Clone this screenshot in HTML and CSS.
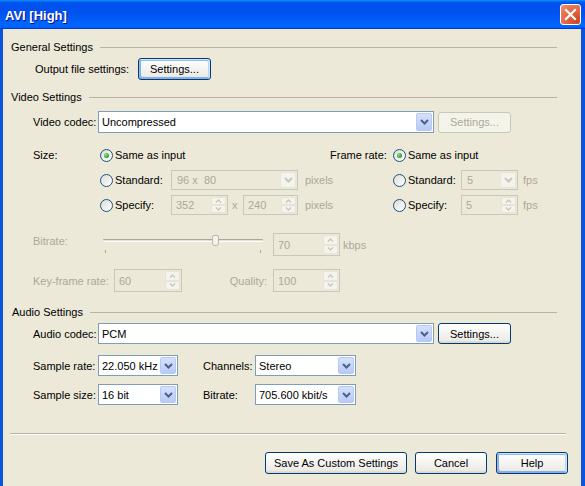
FILE: index.html
```html
<!DOCTYPE html>
<html>
<head>
<meta charset="utf-8">
<title>AVI [High]</title>
<link rel="stylesheet" href="styles.css">
</head>
<body>
<div class="window">
  <div class="titlebar">
    <span class="title">AVI [High]</span>
    <span class="close"><svg width="13" height="13" viewBox="0 0 13 13"><path d="M2 2L11 11M11 2L2 11" stroke="#fff" stroke-width="2.2" stroke-linecap="square"/></svg></span>
  </div>
  <div class="client">
    <div class="ghead ghead-general"><span>General Settings</span><i class="rule"></i></div>
    <div class="row row-output">
      <span class="lbl lbl-output">Output file settings:</span>
      <button class="btn btn-focus w73">Settings...</button>
    </div>

    <div class="ghead ghead-video"><span>Video Settings</span><i class="rule"></i></div>
    <div class="row row-codec">
      <span class="lbl w65">Video codec:</span>
      <div class="combo w336"><span class="val">Uncompressed</span><span class="arrow"><svg width="9" height="6" viewBox="0 0 9 6"><path d="M1 1L4.5 4.5L8 1" fill="none" stroke="#4D6185" stroke-width="2"/></svg></span></div>
      <button class="btn btn-disabled w73 ml4" disabled>Settings...</button>
    </div>

    <div class="size-grid">
      <span class="lbl">Size:</span>
      <label class="radio span2"><i class="rb checked"></i>Same as input</label>
      <span class="lbl fr-lbl">Frame rate:</span>
      <label class="radio span2"><i class="rb checked"></i>Same as input</label>

      <label class="radio c2"><i class="rb"></i>Standard:</label>
      <div class="combo dis"><span class="val">96 x &nbsp;80</span><span class="arrow"><svg width="9" height="6" viewBox="0 0 9 6"><path d="M1 1L4.5 4.5L8 1" fill="none" stroke="#C9C7BA" stroke-width="2"/></svg></span></div>
      <span class="unit">pixels</span>
      <label class="radio"><i class="rb"></i>Standard:</label>
      <div class="combo dis"><span class="val">5</span><span class="arrow"><svg width="9" height="6" viewBox="0 0 9 6"><path d="M1 1L4.5 4.5L8 1" fill="none" stroke="#C9C7BA" stroke-width="2"/></svg></span></div>
      <span class="unit fps">fps</span>

      <label class="radio c2"><i class="rb"></i>Specify:</label>
      <div class="pair">
        <div class="spin w57"><span class="val">352</span><span class="sbtns"><span class="sb"><svg width="7" height="4" viewBox="0 0 7 4"><path d="M1 3.5L3.5 1L6 3.5" fill="none" stroke="#C9C7BA" stroke-width="1.3"/></svg></span><span class="sb"><svg width="7" height="4" viewBox="0 0 7 4"><path d="M1 .5L3.5 3L6 .5" fill="none" stroke="#C9C7BA" stroke-width="1.3"/></svg></span></span></div>
        <span class="times">x</span>
        <div class="spin w55"><span class="val">240</span><span class="sbtns"><span class="sb"><svg width="7" height="4" viewBox="0 0 7 4"><path d="M1 3.5L3.5 1L6 3.5" fill="none" stroke="#C9C7BA" stroke-width="1.3"/></svg></span><span class="sb"><svg width="7" height="4" viewBox="0 0 7 4"><path d="M1 .5L3.5 3L6 .5" fill="none" stroke="#C9C7BA" stroke-width="1.3"/></svg></span></span></div>
      </div>
      <span class="unit">pixels</span>
      <label class="radio"><i class="rb"></i>Specify:</label>
      <div class="spin"><span class="val">5</span><span class="sbtns"><span class="sb"><svg width="7" height="4" viewBox="0 0 7 4"><path d="M1 3.5L3.5 1L6 3.5" fill="none" stroke="#C9C7BA" stroke-width="1.3"/></svg></span><span class="sb"><svg width="7" height="4" viewBox="0 0 7 4"><path d="M1 .5L3.5 3L6 .5" fill="none" stroke="#C9C7BA" stroke-width="1.3"/></svg></span></span></div>
      <span class="unit fps">fps</span>
    </div>

    <div class="row row-bitrate">
      <span class="lbl dlbl w70 top">Bitrate:</span>
      <div class="slider">
        <i class="track"></i>
        <i class="thumb"></i>
        <i class="tick t1"></i>
        <i class="tick t2"></i>
      </div>
      <div class="spin w67 ml10"><span class="val">70</span><span class="sbtns"><span class="sb"><svg width="7" height="4" viewBox="0 0 7 4"><path d="M1 3.5L3.5 1L6 3.5" fill="none" stroke="#C9C7BA" stroke-width="1.3"/></svg></span><span class="sb"><svg width="7" height="4" viewBox="0 0 7 4"><path d="M1 .5L3.5 3L6 .5" fill="none" stroke="#C9C7BA" stroke-width="1.3"/></svg></span></span></div>
      <span class="dlbl kbps">kbps</span>
    </div>

    <div class="row row-key">
      <span class="lbl dlbl w81">Key-frame rate:</span>
      <div class="spin w68"><span class="val">60</span><span class="sbtns"><span class="sb"><svg width="7" height="4" viewBox="0 0 7 4"><path d="M1 3.5L3.5 1L6 3.5" fill="none" stroke="#C9C7BA" stroke-width="1.3"/></svg></span><span class="sb"><svg width="7" height="4" viewBox="0 0 7 4"><path d="M1 .5L3.5 3L6 .5" fill="none" stroke="#C9C7BA" stroke-width="1.3"/></svg></span></span></div>
      <span class="lbl dlbl qlbl">Quality:</span>
      <div class="spin w67"><span class="val">100</span><span class="sbtns"><span class="sb"><svg width="7" height="4" viewBox="0 0 7 4"><path d="M1 3.5L3.5 1L6 3.5" fill="none" stroke="#C9C7BA" stroke-width="1.3"/></svg></span><span class="sb"><svg width="7" height="4" viewBox="0 0 7 4"><path d="M1 .5L3.5 3L6 .5" fill="none" stroke="#C9C7BA" stroke-width="1.3"/></svg></span></span></div>
    </div>

    <div class="ghead ghead-audio"><span>Audio Settings</span><i class="rule"></i></div>
    <div class="row row-acodec">
      <span class="lbl w65">Audio codec:</span>
      <div class="combo w336"><span class="val">PCM</span><span class="arrow"><svg width="9" height="6" viewBox="0 0 9 6"><path d="M1 1L4.5 4.5L8 1" fill="none" stroke="#4D6185" stroke-width="2"/></svg></span></div>
      <button class="btn w73 ml4">Settings...</button>
    </div>
    <div class="row row-srate">
      <span class="lbl w65">Sample rate:</span>
      <div class="combo w80"><span class="val">22.050 kHz</span><span class="arrow"><svg width="9" height="6" viewBox="0 0 9 6"><path d="M1 1L4.5 4.5L8 1" fill="none" stroke="#4D6185" stroke-width="2"/></svg></span></div>
      <span class="lbl lbl2">Channels:</span>
      <div class="combo w101"><span class="val">Stereo</span><span class="arrow"><svg width="9" height="6" viewBox="0 0 9 6"><path d="M1 1L4.5 4.5L8 1" fill="none" stroke="#4D6185" stroke-width="2"/></svg></span></div>
    </div>
    <div class="row row-ssize">
      <span class="lbl w65">Sample size:</span>
      <div class="combo w80"><span class="val">16 bit</span><span class="arrow"><svg width="9" height="6" viewBox="0 0 9 6"><path d="M1 1L4.5 4.5L8 1" fill="none" stroke="#4D6185" stroke-width="2"/></svg></span></div>
      <span class="lbl lbl2">Bitrate:</span>
      <div class="combo w101"><span class="val">705.600 kbit/s</span><span class="arrow"><svg width="9" height="6" viewBox="0 0 9 6"><path d="M1 1L4.5 4.5L8 1" fill="none" stroke="#4D6185" stroke-width="2"/></svg></span></div>
    </div>

    <div class="separator"></div>

    <div class="buttons">
      <button class="btn w142">Save As Custom Settings</button>
      <button class="btn w72">Cancel</button>
      <button class="btn btn-focus w72 help">Help</button>
    </div>
  </div>
</div>
</body>
</html>
```

FILE: styles.css
```css
* { box-sizing: border-box; }
html, body { margin: 0; padding: 0; }
body {
  width: 585px;
  height: 486px;
  overflow: hidden;
  font-family: "Liberation Sans", Arial, sans-serif;
  font-size: 11px;
  color: #000;
  background: #ECE9D8;
}
.window {
  width: 585px;
  height: 486px;
  display: flex;
  flex-direction: column;
}
.titlebar {
  height: 29px;
  flex: none;
  display: flex;
  align-items: center;
  justify-content: space-between;
  padding: 0 4px 0 5px;
  background: linear-gradient(180deg, #0997ff, #0053ee 8%, #0050ee 40%, #0066ff 88%, #0066ff 93%, #005bff 95%, #003dd7 96%, #003dd7);
}
.title {
  color: #fff;
  font-weight: bold;
  font-size: 13px;
  text-shadow: 1px 1px #0f1089;
  letter-spacing: 0;
  margin-top: 1px;
}
.close {
  width: 21px;
  height: 21px;
  border: 1px solid #fff;
  border-radius: 3px;
  display: flex;
  align-items: center;
  justify-content: center;
  background: radial-gradient(circle at 85% 85%, #cc4622 0%, #e0603a 40%, #e97a58 75%, #f39a7c 100%);
}
.client {
  flex: 1;
  display: flex;
  flex-direction: column;
  border-left: 3px solid #0b55dd;
  border-right: 4px solid #0b55dd;
  background: #ECE9D8;
}

/* group headings */
.ghead {
  display: flex;
  align-items: center;
  height: 14px;
  margin-left: 8px;
  margin-right: 24px;
}
.ghead .rule {
  flex: 1;
  height: 1px;
  background: #b7b4a4;
  margin-left: 7px;
}
.ghead-general { margin-top: 11px; }
.ghead-video { margin-top: 10px; }
.ghead-audio { margin-top: 13px; }
.ghead-audio span { margin-left: 1px; }

/* rows */
.row {
  display: flex;
  align-items: center;
  margin-left: 30px;
}
.row-output { margin-top: 4px; height: 22px; margin-left: 32px; }
.row-codec { margin-top: 7px; height: 22px; }
.row-bitrate { margin-top: 18px; height: 23px; }
.row-key { margin-top: 13px; height: 23px; }
.row-acodec { margin-top: 4px; height: 21px; }
.row-srate { margin-top: 11px; height: 21px; }
.row-ssize { margin-top: 8px; height: 21px; }

.lbl { flex: none; white-space: nowrap; }
.lbl-output { width: 103px; }
.w65 { width: 65px; }
.w70 { width: 70px; }
.w81 { width: 81px; }
.dlbl { color: #aca899; }
.top { align-self: flex-start; margin-top: 2px; }
.qlbl { width: 91px; text-align: right; padding-right: 6px; }
.lbl2 { width: 77px; padding-left: 25px; }
.ml4 { margin-left: 4px; }
.ml10 { margin-left: 10px; }

/* buttons */
.btn {
  font: inherit;
  color: #000;
  height: 22px;
  padding: 0;
  border: 1px solid #003c74;
  border-radius: 3px;
  background: linear-gradient(180deg, #fff, #ecebe6 86%, #d6d0c5);
  flex: none;
}
.btn-focus {
  box-shadow: inset -1px 1px #cee7ff, inset 1px 2px #98b8ea, inset -2px 2px #bcd4f6, inset 1px -1px #89ade4, inset 2px -2px #89ade4;
}
.btn-disabled {
  height: 21px;
  border-color: #c9c7ba;
  background: #f5f4ea;
  color: #aca899;
}
.row-acodec .btn { height: 21px; }
.w73 { width: 73px; }
.w72 { width: 72px; }
.w142 { width: 142px; }

/* combo boxes */
.combo {
  flex: none;
  display: flex;
  align-items: stretch;
  height: 100%;
  border: 1px solid #7f9db9;
  background: #fff;
  padding: 1px;
}
.combo .val {
  flex: 1;
  display: flex;
  align-items: center;
  padding-left: 2px;
  white-space: nowrap;
  overflow: hidden;
}
.combo .arrow {
  width: 16px;
  flex: none;
  display: flex;
  align-items: center;
  justify-content: center;
  border: 1px solid #b6c8f5;
  border-radius: 2px;
  background: linear-gradient(180deg, #d5e0fb, #b8caf6);
}
.combo.dis {
  border-color: #c9c7ba;
  background: #ECE9D8;
  height: 20px;
}
.combo.dis .val { color: #aca899; padding-left: 4px; }
.combo.dis .arrow {
  border-color: #e7e5da;
  background: #f4f3ec;
}
.w336 { width: 336px; }
.w80 { width: 80px; }
.w101 { width: 101px; }

/* spinners */
.spin {
  flex: none;
  display: flex;
  align-items: stretch;
  height: 100%;
  border: 1px solid #c9c7ba;
  background: #ECE9D8;
  padding: 1px;
}
.spin .val {
  flex: 1;
  display: flex;
  align-items: center;
  padding-left: 3px;
  color: #aca899;
}
.sbtns {
  width: 15px;
  flex: none;
  display: flex;
  flex-direction: column;
}
.sb {
  flex: 1;
  display: flex;
  align-items: center;
  justify-content: center;
  border: 1px solid #e6e4d9;
  border-radius: 2px;
  background: #f4f3ec;
}
.w57 { width: 57px; }
.w55 { width: 55px; }
.w67 { width: 67px; }
.w68 { width: 68px; }

/* size / frame-rate grid */
.size-grid {
  margin-top: 12px;
  margin-left: 30px;
  display: grid;
  grid-template-columns: 67px 71px 127px 95px 68px 57px 40px;
  grid-template-rows: 20px 20px 20px;
  row-gap: 5px;
  align-items: center;
}
.size-grid .spin { height: 20px; }
.radio {
  display: flex;
  align-items: center;
  white-space: nowrap;
}
.span2 { grid-column: span 2; }
.c2 { grid-column: 2; }
.fr-lbl { padding-left: 32px; }
.rb {
  width: 13px;
  height: 13px;
  border-radius: 50%;
  border: 1px solid #1c5180;
  background: linear-gradient(135deg, #dcdcd7, #fff);
  margin-right: 2px;
  display: flex;
  align-items: center;
  justify-content: center;
  flex: none;
}
.rb.checked::after {
  content: "";
  width: 5px;
  height: 5px;
  border-radius: 50%;
  background: radial-gradient(circle at 35% 35%, #8ce08c, #21a121 70%);
}
.unit { color: #aca899; padding-left: 7px; }
.unit.fps { padding-left: 5px; }
.pair { display: flex; align-items: center; height: 20px; }
.times { color: #aca899; width: 15px; padding-left: 4px; }

/* slider */
.slider {
  position: relative;
  width: 160px;
  height: 23px;
  flex: none;
}
.track {
  position: absolute;
  left: 0;
  right: 0;
  top: 6px;
  height: 3px;
  border-top: 1px solid #a9a79a;
  border-bottom: 1px solid #fff;
  background: #e3e1d5;
  border-radius: 1px;
}
.thumb {
  position: absolute;
  left: 109px;
  top: 2px;
  width: 7px;
  height: 11px;
  border: 1px solid #b9b7aa;
  border-radius: 2px 2px 3px 3px;
  background: #f4f3ec;
}
.tick {
  position: absolute;
  top: 17px;
  width: 1px;
  height: 3px;
  background: #aca899;
}
.t1 { left: 2px; }
.t2 { left: 157px; }
.kbps { margin-left: 3px; }

/* bottom */
.separator {
  margin: 28px 15px 0 7px;
  height: 2px;
  border-top: 1px solid #b7b4a4;
  border-bottom: 1px solid #fff;
  flex: none;
}
.buttons {
  margin-top: 17px;
  margin-right: 13px;
  display: flex;
  justify-content: flex-end;
  gap: 8px;
}
.buttons .help { margin-left: 1px; }
```
